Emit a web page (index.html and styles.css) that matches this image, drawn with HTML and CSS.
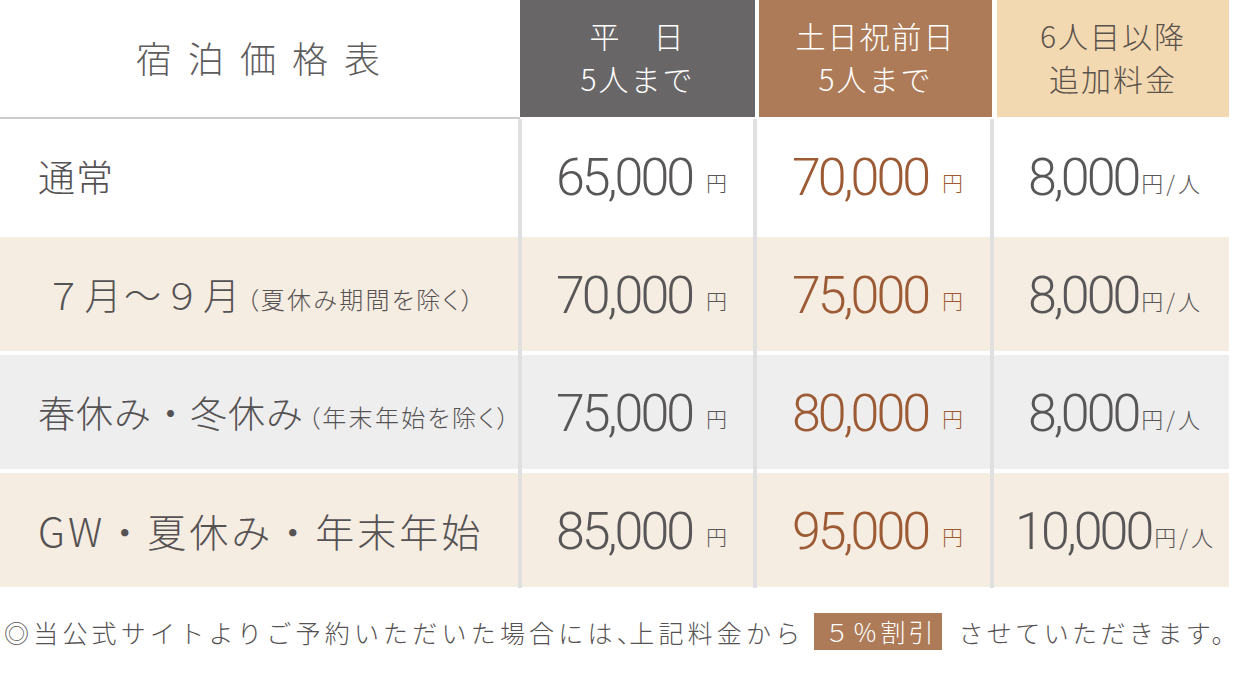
FILE: index.html
```html
<!DOCTYPE html>
<html lang="ja">
<head>
<meta charset="utf-8">
<title>宿泊価格表</title>
<link rel="stylesheet" href="styles.css">
</head>
<body>
<div class="pricing">
  <div class="head">
    <div class="title">宿泊価格表</div>
    <div class="hcell weekday"><span>平　日</span><span>5人まで</span></div>
    <div class="hcell holiday"><span>土日祝前日</span><span>5人まで</span></div>
    <div class="hcell extra"><span>6人目以降</span><span>追加料金</span></div>
  </div>
  <div class="body">
    <div class="row white">
      <div class="label">通常</div>
      <div class="price">65,000<span class="yen">円</span></div>
      <div class="price accent">70,000<span class="yen">円</span></div>
      <div class="price">8,000<span class="per">円/人</span></div>
    </div>
    <div class="row beige">
      <div class="label indent">７月〜９月<small>（夏休み期間を除く）</small></div>
      <div class="price">70,000<span class="yen">円</span></div>
      <div class="price accent">75,000<span class="yen">円</span></div>
      <div class="price">8,000<span class="per">円/人</span></div>
    </div>
    <div class="row gray">
      <div class="label">春休み・冬休み<small>（年末年始を除く）</small></div>
      <div class="price">75,000<span class="yen">円</span></div>
      <div class="price accent">80,000<span class="yen">円</span></div>
      <div class="price">8,000<span class="per">円/人</span></div>
    </div>
    <div class="row beige">
      <div class="label wide"><span class="latin">GW</span>・夏休み・年末年始</div>
      <div class="price">85,000<span class="yen">円</span></div>
      <div class="price accent">95,000<span class="yen">円</span></div>
      <div class="price">10,000<span class="per">円/人</span></div>
    </div>
  </div>
  <p class="note">◎当公式サイトよりご予約いただいた場合には<span class="comma">、</span>上記料金から<span class="badge">５％割引</span><span class="tail">させていただきます。</span></p>
</div>
</body>
</html>
```
FILE: styles.css
```css
* { box-sizing: border-box; }
html, body { margin: 0; padding: 0; background: #fff; }
body {
  font-family: "Noto Sans CJK JP", "Noto Sans", sans-serif;
  font-weight: 300;
  color: #555353;
}
.head, .body { width: 1229px; }

.head {
  display: grid;
  grid-template-columns: 520px 235px 4px 233px 5px 232px;
  height: 119px;
}
.title {
  height: 119px;
  border-bottom: 2px solid #cccccc;
  display: flex;
  align-items: center;
  justify-content: center;
  font-size: 36px;
  letter-spacing: 16px;
  padding-left: 12px;
  padding-bottom: 4px;
  color: #5e5c5c;
}
.hcell {
  height: 117px;
  display: flex;
  flex-direction: column;
  align-items: center;
  justify-content: center;
  font-size: 30px;
  line-height: 43px;
  letter-spacing: 2px;
  padding-bottom: 4px;
}
.weekday { background: #686667; color: #fff; grid-column: 2; }
.holiday { background: #ad7b58; color: #fff; grid-column: 4; }
.extra { background: #f3d9b1; color: #5a524c; grid-column: 6; }

.body {
  display: flex;
  flex-direction: column;
  gap: 4px;
  background: linear-gradient(to right,
    transparent 0 518px, #e0e0e0 518px 522px,
    transparent 522px 753px, #e0e0e0 753px 757px,
    transparent 757px 990px, #e0e0e0 990px 994px,
    transparent 994px);
  padding-bottom: 1px;
}
.row {
  display: grid;
  grid-template-columns: 518px 231px 233px 235px;
  column-gap: 4px;
  height: 114px;
}
.row > div { display: flex; align-items: center; }
.row.white > div { background: #fff; }
.row.beige > div { background: #f5ece2; }
.row.gray > div { background: #eeeeee; }

.label {
  padding-left: 38px;
  font-size: 37px;
  letter-spacing: 1px;
  color: #555253;
  white-space: nowrap;
}
.label.indent { padding-left: 45px; letter-spacing: 2.5px; }
.label.wide { font-size: 39px; letter-spacing: 3px; }
.label .latin { letter-spacing: 3px; font-size: 40px; }
.label small {
  font-size: 24px;
  letter-spacing: 2.3px;
  font-feature-settings: "palt";
  margin-left: 4px;
  padding-top: 8px;
}

.price {
  justify-content: center;
  font-family: Roboto, "Liberation Sans", sans-serif;
  font-weight: 300;
  font-size: 52px;
  letter-spacing: -3px;
  color: #595657;
  padding-left: 8px;
  padding-top: 2px;
}
.price.accent { color: #9c5b34; }
.yen, .per {
  font-family: "Noto Sans CJK JP", sans-serif;
  font-weight: 300;
  font-size: 21px;
  letter-spacing: 0;
  padding-top: 10px;
}
.yen { margin-left: 14px; }
.per { margin-left: 3px; font-size: 22px; letter-spacing: 3px; }

.note {
  margin: 25px 0 0 4px;
  font-size: 25px;
  letter-spacing: 4.2px;
  white-space: nowrap;
  color: #555253;
  display: flex;
  align-items: center;
}
.note .comma { font-feature-settings: "halt"; letter-spacing: 0; }
.note .tail { letter-spacing: 3.4px; }
.badge {
  display: inline-block;
  background: #ad7b58;
  color: #fff;
  height: 37px;
  line-height: 37px;
  padding: 0 6px 0 10px;
  margin: 0 16px 0 10px;
  letter-spacing: 3px;
}
```
